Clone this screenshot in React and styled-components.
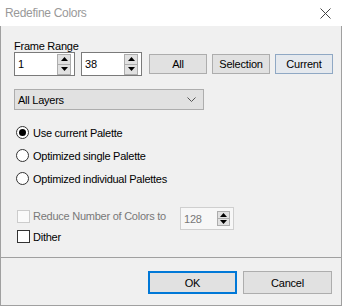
import React from 'react';
import styled, { createGlobalStyle } from 'styled-components';

const GlobalStyle = createGlobalStyle`
  html, body {
    margin: 0;
    padding: 0;
    background: #f0f0f0;
  }
  body {
    font-family: 'Liberation Sans', Arial, sans-serif;
    font-size: 11px;
    color: #000;
  }
`;

const Dialog = styled.div`
  width: 342px;
  height: 306px;
  display: flex;
  flex-direction: column;
  background: #f0f0f0;
  box-sizing: border-box;
`;

const TitleBar = styled.div`
  height: 26px;
  flex: none;
  display: flex;
  align-items: center;
  justify-content: space-between;
  padding: 0 11px 0 5px;
  background: #fff;
  color: #999;
  font-size: 12px;
  letter-spacing: -0.3px;
`;

const Body = styled.div`
  flex: 1;
  padding: 14px 0 0 13px;
  border-left: 1px solid #a0a0a0;
  border-right: 1px solid #a0a0a0;
`;

const Label = styled.div`
  height: 12px;
  line-height: 12px;
  letter-spacing: -0.25px;
`;

const Row = styled.div`
  display: flex;
  align-items: center;
  gap: ${p => p.gap || 0}px;
  height: ${p => p.h}px;
  margin-top: ${p => p.mt || 0}px;
`;

const SpinBox = styled.div`
  width: ${p => p.w}px;
  height: ${p => p.h}px;
  box-sizing: border-box;
  display: flex;
  align-items: center;
  padding: 0 3px 0 3px;
  border: 1px solid ${p => (p.disabled ? '#cfcfcf' : '#7a7a7a')};
  background: ${p => (p.disabled ? '#f7f7f7' : '#fff')};
  color: ${p => (p.disabled ? '#787878' : '#000')};
  letter-spacing: -0.2px;
`;

const SpinValue = styled.span`
  flex: 1;
`;

const Spinner = styled.div`
  display: flex;
  flex-direction: column;
  width: ${p => p.w}px;
`;

const SpinBtn = styled.div`
  height: ${p => p.h}px;
  box-sizing: border-box;
  display: flex;
  align-items: center;
  justify-content: center;
  background: #e1e1e1;
  border: 1px solid #adadad;
  & + & {
    border-top: none;
  }
`;

const ButtonGroup = styled.div`
  display: flex;
  gap: 5px;
  margin-left: 1px;
`;

const Button = styled.div`
  width: ${p => p.w}px;
  height: ${p => p.h}px;
  box-sizing: border-box;
  display: flex;
  align-items: center;
  justify-content: center;
  background: ${p => (p.hot ? '#e5e9ee' : '#e1e1e1')};
  border: ${p => (p.primary ? '2px solid #0078d7' : p.hot ? '1px solid #8fa8c4' : '1px solid #adadad')};
  letter-spacing: -0.2px;
`;

const Select = styled.div`
  width: 190px;
  height: 21px;
  margin-top: 13px;
  box-sizing: border-box;
  display: flex;
  align-items: center;
  justify-content: space-between;
  padding: 0 7px 0 3px;
  background: #e1e1e1;
  border: 1px solid #adadad;
  letter-spacing: -0.25px;
`;

const RadioGroup = styled.div`
  margin-top: 11px;
  display: flex;
  flex-direction: column;
`;

const Option = styled.div`
  height: 23px;
  display: flex;
  align-items: center;
  gap: ${p => p.gap}px;
  padding-left: ${p => p.indent}px;
  letter-spacing: -0.25px;
  color: ${p => (p.disabled ? '#787878' : '#000')};
`;

const RadioCircle = styled.span`
  width: 13px;
  height: 13px;
  box-sizing: border-box;
  border-radius: 50%;
  border: 1px solid #333;
  background: #fff;
  display: flex;
  align-items: center;
  justify-content: center;
  &::after {
    content: '';
    width: 7px;
    height: 7px;
    border-radius: 50%;
    background: ${p => (p.checked ? '#000' : 'transparent')};
  }
`;

const CheckBox = styled.span`
  width: 13px;
  height: 13px;
  box-sizing: border-box;
  border: 1px solid ${p => (p.disabled ? '#cccccc' : '#333')};
  background: ${p => (p.disabled ? '#fafafa' : '#fff')};
`;

const Options = styled.div`
  margin-top: 17px;
`;

const ReduceRow = styled.div`
  display: flex;
  align-items: flex-start;
  height: 23px;
`;

const ReduceLabel = styled(Option)`
  width: 166px;
  height: 18px;
  box-sizing: border-box;
`;

const DitherRow = styled(Option)`
  height: 13px;
`;

const Footer = styled.div`
  height: 49px;
  flex: none;
  box-sizing: border-box;
  display: flex;
  justify-content: flex-end;
  gap: 6px;
  padding: 13px 9px 0 0;
  border: 1px solid #a0a0a0;
`;

const Arrow = ({ down }) => (
  <svg width="7" height="4" viewBox="0 0 7 4">
    <path d={down ? 'M0 0 L7 0 L3.5 4 Z' : 'M0 4 L7 4 L3.5 0 Z'} fill="#000" />
  </svg>
);

const Spin = ({ value, w, h, spinW, spinH, disabled }) => (
  <SpinBox w={w} h={h} disabled={disabled}>
    <SpinValue>{value}</SpinValue>
    <Spinner w={spinW}>
      <SpinBtn h={spinH}><Arrow /></SpinBtn>
      <SpinBtn h={spinH - 1}><Arrow down /></SpinBtn>
    </Spinner>
  </SpinBox>
);

const palettes = [
  { label: 'Use current Palette', checked: true },
  { label: 'Optimized single Palette' },
  { label: 'Optimized individual Palettes' },
];

export default function App() {
  return (
    <>
      <GlobalStyle />
      <Dialog>
        <TitleBar>
          <span>Redefine Colors</span>
          <svg width="11" height="11" viewBox="0 0 11 11">
            <path d="M0.5 0.5 L10.5 10.5 M10.5 0.5 L0.5 10.5" stroke="#444" strokeWidth="1" />
          </svg>
        </TitleBar>
        <Body>
          <Label>Frame Range</Label>
          <Row h={24} gap={6}>
            <Spin value="1" w={61} h={24} spinW={14} spinH={11} />
            <Spin value="38" w={61} h={24} spinW={14} spinH={11} />
            <ButtonGroup>
              <Button w={58} h={20}>All</Button>
              <Button w={58} h={20}>Selection</Button>
              <Button w={58} h={20} hot>Current</Button>
            </ButtonGroup>
          </Row>
          <Select>
            <span>All Layers</span>
            <svg width="9" height="5" viewBox="0 0 9 5">
              <path d="M0.5 0.5 L4.5 4.5 L8.5 0.5" fill="none" stroke="#555" strokeWidth="1" />
            </svg>
          </Select>
          <RadioGroup>
            {palettes.map(p => (
              <Option key={p.label} indent={2} gap={4}>
                <RadioCircle checked={p.checked} />
                <span>{p.label}</span>
              </Option>
            ))}
          </RadioGroup>
          <Options>
            <ReduceRow>
              <ReduceLabel indent={3} gap={3} disabled>
                <CheckBox disabled />
                <span>Reduce Number of Colors to</span>
              </ReduceLabel>
              <Spin value="128" w={54} h={23} spinW={13} spinH={8} disabled />
            </ReduceRow>
            <DitherRow indent={3} gap={3}>
              <CheckBox />
              <span>Dither</span>
            </DitherRow>
          </Options>
        </Body>
        <Footer>
          <Button w={89} h={23} primary>OK</Button>
          <Button w={89} h={23}>Cancel</Button>
        </Footer>
      </Dialog>
    </>
  );
}
